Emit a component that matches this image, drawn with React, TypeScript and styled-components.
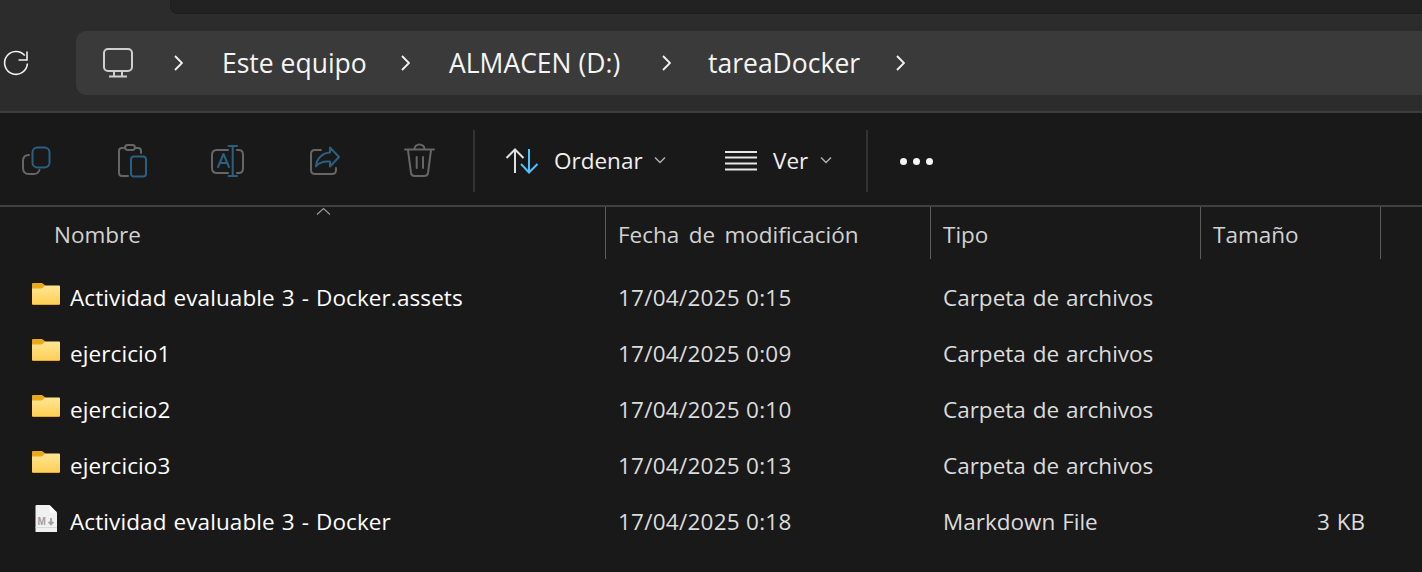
import * as React from 'react'
import styled, { createGlobalStyle } from 'styled-components'

const GlobalStyle = createGlobalStyle`
  html, body {
    margin: 0;
    padding: 0;
    width: 1422px;
    height: 572px;
    overflow: hidden;
    background: #191919;
    font-family: "Open Sans", "Noto Sans", "Liberation Sans", sans-serif;
  }
`

const Page = styled.div`
  width: 1422px;
  height: 572px;
  display: flex;
  flex-direction: column;
  background: #191919;
  overflow: hidden;
`

const Chrome = styled.header`
  background: #2c2c2c;
  border-bottom: 2px solid #3c3c3c;
  height: 111px;
`

const TabStrip = styled.div`
  height: 14px;
  padding-left: 170px;
  display: flex;
`

const TabEdge = styled.div`
  flex: 1;
  background: #222222;
  border-bottom: 1px solid #1e1e1e;
  border-left: 1px solid #1e1e1e;
  border-bottom-left-radius: 8px;
`

const NavRow = styled.div`
  display: flex;
  align-items: center;
  padding-top: 17px;
`

const ReloadIcon = styled.svg`
  width: 32px;
  height: 32px;
  flex: none;
  fill: none;
  stroke: #f2f2f2;
  stroke-width: 1.6;
`

const AddressBar = styled.nav`
  flex: 1;
  height: 64px;
  margin-left: 44px;
  padding-left: 27px;
  display: flex;
  align-items: center;
  background: #3a3a3a;
  border-radius: 10px 0 0 10px;
`

const MonitorIcon = styled.svg`
  width: 30px;
  height: 30px;
  flex: none;
  margin-right: 41px;
  fill: none;
  stroke: #cfcfcf;
  stroke-width: 2;
`

const Chevron = styled.svg`
  width: 9px;
  height: 16px;
  flex: none;
  fill: none;
  stroke: #f2f2f2;
  stroke-width: 1.9;
`

const Crumb = styled.span<{ $width: number; $gap: number }>`
  width: ${p => p.$width}px;
  margin-left: ${p => p.$gap}px;
  flex: none;
  color: #f5f5f5;
  font-size: 26.5px;
  line-height: 34px;
  white-space: nowrap;
`

const Toolbar = styled.div`
  height: 88px;
  padding-top: 4px;
  flex: none;
  display: flex;
  align-items: center;
  padding-left: 12px;
  border-bottom: 2px solid #3f3f3f;
`

const ActionGroup = styled.div`
  display: flex;
  gap: 48px;
`

const ActionIcon = styled.svg`
  width: 48px;
  height: 48px;
  flex: none;
  fill: none;
  stroke-width: 2;
  stroke-linecap: round;
  stroke-linejoin: round;
`

const Muted = styled.path`
  stroke: #666666;
`

const Accent = styled.path`
  stroke: #2b6080;
`

const Divider = styled.div<{ $gap: number }>`
  width: 2px;
  height: 62px;
  flex: none;
  margin-left: ${p => p.$gap}px;
  background: #333333;
`

const MenuButton = styled.div<{ $gap: number }>`
  display: flex;
  align-items: center;
  flex: none;
  margin-left: ${p => p.$gap}px;
  color: #f0f0f0;
  font-size: 22.5px;
  line-height: 30px;
`

const MenuLabel = styled.span<{ $gap: number; $width: number }>`
  width: ${p => p.$width}px;
  margin-left: ${p => p.$gap}px;
  white-space: nowrap;
`

const SortIcon = styled.svg`
  width: 35px;
  height: 26px;
  flex: none;
  fill: none;
  stroke-width: 2;
`

const ViewIcon = styled.svg`
  width: 32px;
  height: 22px;
  flex: none;
  fill: none;
  stroke: #e6e6e6;
  stroke-width: 2;
`

const Caret = styled.svg`
  width: 14px;
  height: 8px;
  flex: none;
  margin-left: 10px;
  margin-top: -2px;
  fill: none;
  stroke: #b0b0b0;
  stroke-width: 1.5;
`

const MoreDots = styled.div`
  display: flex;
  gap: 6px;
  margin-left: 32px;
`

const Dot = styled.span`
  width: 7px;
  height: 7px;
  border-radius: 50%;
  background: #f5f5f5;
`

const columns = '606px 325px 270px 180px'

const HeaderRow = styled.div`
  position: relative;
  height: 52px;
  flex: none;
  display: grid;
  grid-template-columns: ${columns};
`

const SortMark = styled.svg`
  position: absolute;
  left: 316px;
  top: 0;
  width: 15px;
  height: 8px;
  fill: none;
  stroke: #9a9a9a;
  stroke-width: 1.2;
`

const HeaderCell = styled.div<{ $first?: boolean }>`
  box-sizing: border-box;
  display: flex;
  align-items: center;
  padding-top: 3px;
  padding-left: ${p => (p.$first ? 54 : 12)}px;
  border-right: 1px solid #5c5c5c;
  color: #d2d2d2;
  font-size: 22.5px;
  word-spacing: 3.5px;
  white-space: nowrap;
`

const FileList = styled.div`
  padding-top: 11px;
`

const FileRow = styled.div`
  box-sizing: border-box;
  height: 56px;
  padding-top: 13px;
  display: grid;
  grid-template-columns: ${columns};
  align-items: start;
  font-size: 22.5px;
  word-spacing: 1px;
  line-height: 30px;
  white-space: nowrap;
`

const NameCell = styled.div`
  display: flex;
  align-items: center;
  padding-left: 32px;
  color: #ffffff;
  letter-spacing: 0.1px;
`

const IconSlot = styled.div`
  width: 28px;
  height: 28px;
  margin-right: 10px;
  margin-top: -8px;
  flex: none;
  display: flex;
  justify-content: center;
`

const DateCell = styled.div`
  padding-left: 12px;
  color: #dcdcdc;
  letter-spacing: 0.25px;
  word-spacing: 0;
`

const TypeCell = styled.div`
  padding-left: 12px;
  color: #dcdcdc;
`

const SizeCell = styled.div`
  padding-right: 16px;
  text-align: right;
  color: #dcdcdc;
`

const Glyph = styled.svg`
  width: 28px;
  height: 28px;
  flex: none;
`

const MarkdownMark = styled.text`
  font-family: "Liberation Sans", sans-serif;
  font-size: 10px;
  font-weight: 700;
  fill: #a0a0a0;
`

const FolderGlyph = ({ id }: { id: string }) => (
  <Glyph viewBox="0 0 28 28">
    <defs>
      <linearGradient id={id} x1="0" y1="0" x2="0" y2="1">
        <stop offset="0" stopColor="#ffe694" />
        <stop offset="1" stopColor="#ffcf56" />
      </linearGradient>
    </defs>
    <path d="M1 3h9l4 3h13a1 1 0 0 1 1 1v17a1 1 0 0 1-1 1H1a1 1 0 0 1-1-1V4a1 1 0 0 1 1-1z" fill="#eba91f" />
    <path d="M0 8.500h9.500l4-3H27a1 1 0 0 1 1 1V23.500a.5 .5 0 0 1-.5 .5H.5a.5 .5 0 0 1-.5-.5z" fill={`url(#${id})`} />
  </Glyph>
)

const MarkdownGlyph = () => (
  <Glyph viewBox="0 0 28 28">
    <path d="M4.500 1h13l7.500 7.500V28a1 1 0 0 1-1 1H4.500a1 1 0 0 1-1-1V2a1 1 0 0 1 1-1z" fill="#f0f0f0" />
    <path d="M17.500 1l7.500 7.500h-6.500a1 1 0 0 1-1-1z" fill="#ffffff" />
    <path d="M3.500 23h21.500v1H3.500z" fill="#dadada" />
    <MarkdownMark x="5.600" y="21">M</MarkdownMark>
    <path d="M19 14v6.500M16.600 17.800l2.400 2.700 2.400-2.700" fill="none" stroke="#a0a0a0" strokeWidth="1.800" />
  </Glyph>
)

const ChevronRight = () => (
  <Chevron viewBox="0 0 9 16">
    <path d="M1 1l7 7-7 7" />
  </Chevron>
)

const CaretDown = () => (
  <Caret viewBox="0 0 14 8">
    <path d="M2 1.500l5 5 5-5" />
  </Caret>
)

const crumbs = [
  { label: 'Este equipo', width: 179, gap: 39 },
  { label: 'ALMACEN (D:)', width: 213, gap: 39 },
  { label: 'tareaDocker', width: 188, gap: 37 },
]

const files = [
  { name: 'Actividad evaluable 3 - Docker.assets', date: '17/04/2025 0:15', type: 'Carpeta de archivos', size: '' },
  { name: 'ejercicio1', date: '17/04/2025 0:09', type: 'Carpeta de archivos', size: '' },
  { name: 'ejercicio2', date: '17/04/2025 0:10', type: 'Carpeta de archivos', size: '' },
  { name: 'ejercicio3', date: '17/04/2025 0:13', type: 'Carpeta de archivos', size: '' },
  { name: 'Actividad evaluable 3 - Docker', date: '17/04/2025 0:18', type: 'Markdown File', size: '3 KB' },
]

const App = () => (
  <Page>
    <GlobalStyle />
    <Chrome>
      <TabStrip>
        <TabEdge />
      </TabStrip>
      <NavRow>
        <ReloadIcon viewBox="0 0 32 32">
          <path d="M24.800 8.600A11.400 11.400 0 1 0 27.400 16.500" />
          <path d="M27 4.500V13H18.500" />
        </ReloadIcon>
        <AddressBar>
          <MonitorIcon viewBox="0 0 30 30">
            <rect x="1" y="1" width="28" height="22" rx="4" />
            <path d="M11 23v5M19 23v5M6 28.500h18" />
          </MonitorIcon>
          <ChevronRight />
          {crumbs.map(c => (
            <React.Fragment key={c.label}>
              <Crumb $width={c.width} $gap={c.gap}>{c.label}</Crumb>
              <ChevronRight />
            </React.Fragment>
          ))}
        </AddressBar>
      </NavRow>
    </Chrome>

    <Toolbar>
      <ActionGroup>
        <ActionIcon viewBox="0 0 48 48">
          <Accent d="M25.500 10.500h7a5 5 0 0 1 5 5v10a5 5 0 0 1-5 5h-7a5 5 0 0 1-5-5v-10a5 5 0 0 1 5-5z" />
          <Muted d="M17 18q-6 0-6 6v7q0 6 6 6h5q4 0 5.500-4" />
        </ActionIcon>
        <ActionIcon viewBox="0 0 48 48">
          <Muted d="M17 11h-3q-3 0-3 3v22q0 3 3 3h6M27 11h3q3 0 3 3v2" />
          <Muted d="M19.500 8h5a2.500 2.500 0 0 1 0 5h-5a2.500 2.500 0 0 1 0-5z" />
          <Accent d="M26 19.500h9a3 3 0 0 1 3 3v14a3 3 0 0 1-3 3h-9a3 3 0 0 1-3-3v-14a3 3 0 0 1 3-3z" />
        </ActionIcon>
        <ActionIcon viewBox="0 0 48 48">
          <Muted d="M24 13H13q-5 0-5 5v13q0 5 5 5h11M33 13h2q4 0 4 5v13q0 5-4 5h-2" />
          <Accent d="M28.700 9v30M24.500 9h8.500M24.500 39h8.500M14 30l5.500-13 5.500 13M16 26h7" />
        </ActionIcon>
        <ActionIcon viewBox="0 0 48 48">
          <Muted d="M21 13h-6q-4 0-4 4v16q0 4 4 4h17q4 0 4-4v-2" />
          <Accent d="M30 10.500L39 20l-9 9.500v-5c-6-.5-11 .5-14 5 .5-8.500 7-13.500 14-14z" />
        </ActionIcon>
        <ActionIcon viewBox="0 0 48 48">
          <Muted d="M9 12.500h29M18.500 12a5 4.500 0 0 1 10 0M12 13l3 23q.5 3 4 3h9q3.500 0 4-3l3-23M20.700 20v11M27 20v11" />
        </ActionIcon>
      </ActionGroup>
      <Divider $gap={29} />
      <MenuButton $gap={30}>
        <SortIcon viewBox="0 0 35 26">
          <path d="M10 1.500V25M1.500 10L10 1.500l8.500 8.500" stroke="#e0e0e0" />
          <path d="M24 1V24.500M16 16l8 8.500 8.500-8.500" stroke="#4cc2ff" />
        </SortIcon>
        <MenuLabel $gap={14} $width={89}>Ordenar</MenuLabel>
        <CaretDown />
      </MenuButton>
      <MenuButton $gap={58}>
        <ViewIcon viewBox="0 0 32 22">
          <path d="M0 2h32M0 7.500h32M0 13.500h32M0 19.500h32" />
        </ViewIcon>
        <MenuLabel $gap={16} $width={36}>Ver</MenuLabel>
        <CaretDown />
      </MenuButton>
      <Divider $gap={33} />
      <MoreDots>
        <Dot />
        <Dot />
        <Dot />
      </MoreDots>
    </Toolbar>

    <HeaderRow>
      <SortMark viewBox="0 0 15 8">
        <path d="M1 7.500l6.500-6 6.500 6" />
      </SortMark>
      <HeaderCell $first>Nombre</HeaderCell>
      <HeaderCell>Fecha de modificación</HeaderCell>
      <HeaderCell>Tipo</HeaderCell>
      <HeaderCell>Tamaño</HeaderCell>
    </HeaderRow>

    <FileList>
      {files.map((f, i) => (
        <FileRow key={f.name}>
          <NameCell>
            <IconSlot>
              {f.type === 'Markdown File' ? <MarkdownGlyph /> : <FolderGlyph id={`folder-${i}`} />}
            </IconSlot>
            {f.name}
          </NameCell>
          <DateCell>{f.date}</DateCell>
          <TypeCell>{f.type}</TypeCell>
          <SizeCell>{f.size}</SizeCell>
        </FileRow>
      ))}
    </FileList>
  </Page>
)

export default App
